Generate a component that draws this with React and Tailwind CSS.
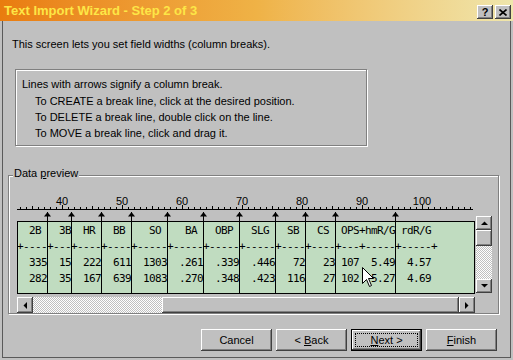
const breaks = [47, 71, 101, 131, 167, 203, 239, 275, 305, 335, 395];

const header =
  "  2B " + "  3B" + "  HR " + "  BB " + "   SO " + "   BA " + "  OBP " + "  SLG " + "  SB " + "  CS " + " OPS+hmR/G" + " rdR/G";
const row1 =
  "  335" + "  15" + "  222" + "  611" + "  1303" + "  .261" + "  .339" + "  .446" + "   72" + "   23" + " 107  5.49" + "  4.57";
const row2 =
  "  282" + "  35" + "  167" + "  639" + "  1083" + "  .270" + "  .348" + "  .423" + "  116" + "   27" + " 102  5.27" + "  4.69";

const plus = [0, 5, 9, 14, 19, 25, 31, 37, 43, 48, 53, 57, 63, 69];
const dashes = Array.from({ length: 70 }, (_, i) => (plus.includes(i) ? "+" : "-")).join("");

const bevel =
  "bg-[#c0c0c0] shadow-[inset_-1px_-1px_0_#404040,inset_1px_1px_0_#fff,inset_-2px_-2px_0_#808080]";

function Arrow({ dir }) {
  const pts = {
    up: "3.5,0.5 0,4 7,4",
    down: "0,0 7,0 3.5,3.5",
    left: "0.5,3.5 4,0 4,7",
    right: "0,0 0,7 3.5,3.5",
  }[dir];
  const vertical = dir === "up" || dir === "down";
  return (
    <svg width={vertical ? 7 : 4} height={vertical ? 4 : 7} className="block">
      <polygon points={pts} fill="#000" />
    </svg>
  );
}

function Ruler() {
  const ticks = [];
  for (let k = 0; k <= 75; k++) {
    const p = 33 + k;
    const x = 3 + 6 * k;
    const major = p % 10 === 0;
    const mid = p % 5 === 0;
    ticks.push(
      <rect key={k} x={x} y={major ? 9 : mid ? 10 : 11} width="1" height={major ? 4 : mid ? 3 : 2} fill="#000" />
    );
  }
  const labels = [40, 50, 60, 70, 80, 90, 100];
  return (
    <div className="relative h-[25px]">
      <svg width="458" height="25" className="absolute left-0 top-0">
        <rect x="0" y="13" width="456" height="1" fill="#000" />
        {ticks}
      </svg>
      {labels.map((n, i) => (
        <span
          key={n}
          className="absolute top-0 leading-[11px] -translate-x-1/2"
          style={{ left: 45 + 60 * i }}
        >
          {n}
        </span>
      ))}
    </div>
  );
}

function Button({ children, isDefault }) {
  return (
    <button
      className={`relative w-[71px] h-[22px] flex items-center justify-center leading-[13px] ${
        isDefault
          ? "bg-[#c0c0c0] shadow-[inset_0_0_0_1px_#000,inset_-2px_-2px_0_#404040,inset_2px_2px_0_#fff,inset_-3px_-3px_0_#808080]"
          : bevel
      }`}
    >
      <span className="whitespace-pre">{children}</span>
      {isDefault && <span className="absolute inset-[4px] border border-dotted border-black" />}
    </button>
  );
}

export default function App() {
  return (
    <div className="w-[513px] h-[360px] bg-[#c0c0c0] flex flex-col overflow-hidden font-['Liberation_Sans',Arial,sans-serif] text-[11px] text-black">
      {/* Title bar */}
      <div className="h-[21px] flex justify-between bg-linear-to-r from-[#e97c0e] via-[#efb246] to-[#efe6ac]">
        <span className="pl-[4px] mt-[3px] leading-[15px] text-[13px] font-bold text-[#fde646]">
          Text Import Wizard - Step 2 of 3
        </span>
        <div className="flex gap-[2px] mt-[5px] mr-[2px]">
          <div className={`w-[16px] h-[14px] flex items-center justify-center font-bold text-[11px] leading-[11px] ${bevel}`}>
            ?
          </div>
          <div className={`w-[16px] h-[14px] flex items-center justify-center ${bevel}`}>
            <svg width="8" height="7">
              <path d="M0.5 0.5 L7.5 6.5 M7.5 0.5 L0.5 6.5" stroke="#000" strokeWidth="1.6" />
            </svg>
          </div>
        </div>
      </div>

      {/* Body */}
      <div className="flex-1 mx-[2px] mb-[2px] border-x border-b border-[#5a5a5a] flex flex-col">
        <p className="mt-[17px] ml-[9px] leading-[13px]">
          This screen lets you set field widths (column breaks).
        </p>

        <div className="mt-[18px] ml-[12px] w-[352px] h-[77px] border border-[#808080] shadow-[inset_1px_1px_0_#fff,1px_1px_0_#fff] pt-[6px] pl-[6px] leading-[16px]">
          <p>Lines with arrows signify a column break.</p>
          <div className="ml-[13px] mt-[1px]">
            <p>To CREATE a break line, click at the desired position.</p>
            <p>To DELETE a break line, double click on the line.</p>
            <p>To MOVE a break line, click and drag it.</p>
          </div>
        </div>

        {/* Data preview group */}
        <div className="relative mt-[29px] ml-[5px] w-[491px] border border-[#808080] shadow-[inset_1px_1px_0_#fff,1px_1px_0_#fff] pl-[8px] pt-[20px]">
          <span className="absolute left-[4px] -top-[9px] px-[1px] leading-[13px] bg-[#c0c0c0]">
            Data <u>p</u>review
          </span>

          <div className="flex items-start">
            <div className="relative w-[458px]">
              <Ruler />
              <div className="h-[73px] border border-black bg-[#c0dcc0] overflow-hidden">
                <div className="-ml-px pt-[1px] whitespace-pre font-['DejaVu_Sans_Mono',monospace] text-[11px] tracking-[-0.622px] leading-[16px]">
                  <div>{header}</div>
                  <div>{dashes}</div>
                  <div>{row1}</div>
                  <div>{row2}</div>
                </div>
              </div>

              {/* column break markers */}
              {breaks.map((x) => (
                <svg
                  key={x}
                  width="7"
                  height="82"
                  className="absolute top-[16px]"
                  style={{ left: x - 17 - 3 }}
                >
                  <polygon points="3.5,0 0,4.5 7,4.5" fill="#000" />
                  <rect x="3" y="0" width="1" height="82" fill="#000" />
                </svg>
              ))}

              {/* mouse pointer */}
              <svg width="13" height="21" className="absolute left-[345px] top-[71px]">
                <path
                  d="M0.5 0.5 L0.5 16.5 L4.5 12.5 L7.5 19.5 L9.5 18.5 L6.5 11.5 L11.5 11.5 Z"
                  fill="#fff"
                  stroke="#000"
                  strokeWidth="1"
                />
              </svg>
            </div>

            {/* vertical scrollbar */}
            <div className="ml-[1px] mt-[20px] w-[16px] h-[77px] flex flex-col">
              <div className={`h-[14px] flex items-center justify-center ${bevel}`}>
                <Arrow dir="up" />
              </div>
              <div className={`h-[16px] ${bevel}`} />
              <div className="flex-1 bg-[image:repeating-conic-gradient(#fff_0%_25%,#c0c0c0_0%_50%)] bg-[length:2px_2px]" />
              <div className={`h-[14px] flex items-center justify-center ${bevel}`}>
                <Arrow dir="down" />
              </div>
            </div>
          </div>

          {/* horizontal scrollbar */}
          <div className="mt-[3px] w-[458px] h-[16px] flex">
            <div className={`w-[16px] flex items-center justify-center ${bevel}`}>
              <Arrow dir="left" />
            </div>
            <div className="w-[129px] bg-[image:repeating-conic-gradient(#fff_0%_25%,#c0c0c0_0%_50%)] bg-[length:2px_2px]" />
            <div className={`flex-1 ${bevel}`} />
            <div className={`w-[16px] flex items-center justify-center ${bevel}`}>
              <Arrow dir="right" />
            </div>
          </div>
        </div>

        {/* Buttons */}
        <div className="mt-[15px] pr-[13px] flex justify-end gap-[4px]">
          <Button>Cancel</Button>
          <Button>
            {"< "}
            <u>B</u>ack
          </Button>
          <Button isDefault>
            <u>N</u>ext {">"}
          </Button>
          <Button>
            <u>F</u>inish
          </Button>
        </div>
      </div>
    </div>
  );
}
